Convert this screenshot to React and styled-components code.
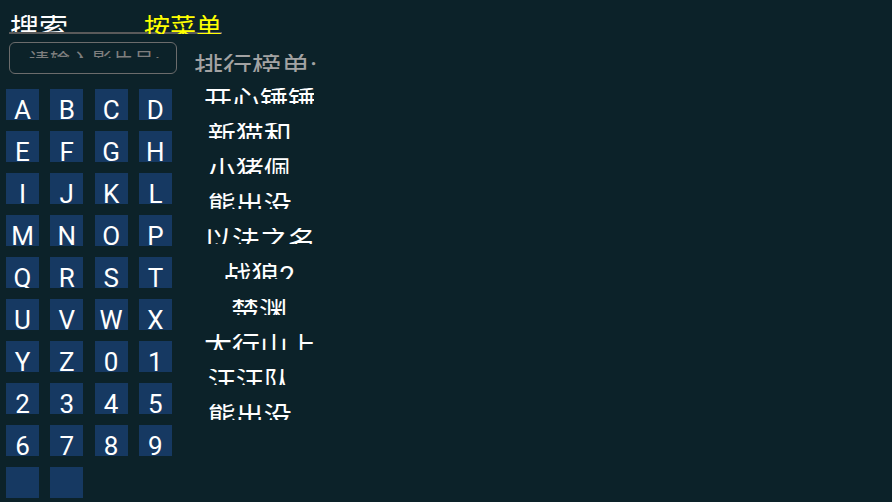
import React from "react";
import styled, { createGlobalStyle } from "styled-components";

const GlobalStyle = createGlobalStyle`
  html, body {
    margin: 0;
    padding: 0;
    background: #0c2229;
  }
  body {
    font-family: Roboto, "Noto Sans CJK SC", sans-serif;
    color: #fff;
  }
`;

const keys = [
  "A", "B", "C", "D", "E", "F", "G", "H", "I", "J", "K", "L", "M",
  "N", "O", "P", "Q", "R", "S", "T", "U", "V", "W", "X", "Y", "Z",
  "0", "1", "2", "3", "4", "5", "6", "7", "8", "9", "", "",
];

const ranking = [
  "开心锤锤",
  "新猫和…",
  "小猪佩…",
  "熊出没…",
  "以法之名",
  "战狼2",
  "楚渊",
  "太行山上",
  "汪汪队…",
  "熊出没…",
];

const Page = styled.div`
  width: 892px;
  height: 502px;
  overflow: hidden;
`;

const Header = styled.div`
  display: flex;
  align-items: flex-start;
  width: 213px;
  height: 32px;
  margin-left: 9px;
  border-bottom: 2px solid #5a5a5a;
`;

const Tab = styled.div`
  margin-top: 15px;
  margin-left: ${(p) => (p.$active ? "auto" : "1px")};
  height: ${(p) => (p.$active ? 19 : 17)}px;
  overflow: hidden;
  font-size: ${(p) => (p.$active ? 26 : 29)}px;
  line-height: 1;
  color: ${(p) => (p.$active ? "#ffff00" : "#ffffff")};
  white-space: nowrap;
`;

const Main = styled.div`
  display: flex;
  padding-left: 6px;
`;

const LeftCol = styled.div`
  width: 172px;
  display: flex;
  flex-direction: column;
`;

const SearchBox = styled.div`
  box-sizing: border-box;
  width: 168px;
  height: 32px;
  margin: 8px 0 0 3px;
  border: 1.5px solid #6c6c6c;
  border-radius: 6px;
`;

const Placeholder = styled.div`
  margin: 8px 0 0 19px;
  height: 7px;
  overflow: hidden;
  font-size: 20px;
  line-height: 1;
  letter-spacing: 1px;
  color: #7e7e7e;
  white-space: nowrap;
`;

const KeyGrid = styled.div`
  display: grid;
  grid-template-columns: repeat(4, 33px);
  grid-auto-rows: 31px;
  column-gap: 11.3px;
  row-gap: 11px;
  margin-top: 15px;
`;

const Key = styled.div`
  box-sizing: border-box;
  height: 31px;
  padding-top: 8px;
  overflow: hidden;
  background: #163962;
  color: #fff;
  font-size: 26px;
  line-height: 26px;
  text-align: center;
`;

const RightCol = styled.div`
  margin-left: 16px;
  display: flex;
  flex-direction: column;
`;

const RankTitle = styled.div`
  margin-top: 20px;
  height: 18px;
  overflow: hidden;
  font-size: 29px;
  line-height: 1;
  color: #a3a3a3;
  white-space: nowrap;
`;

const RankList = styled.div`
  display: flex;
  flex-direction: column;
  gap: 19.1px;
  margin-top: 16px;
  padding-left: 10px;
`;

const RankItem = styled.div`
  width: 110px;
  height: 16px;
  overflow: hidden;
  font-size: 28px;
  line-height: 1;
  text-align: center;
  white-space: nowrap;
  color: #fff;
`;

export default function App() {
  return (
    <Page>
      <GlobalStyle />
      <Header>
        <Tab>搜索</Tab>
        <Tab $active>按菜单</Tab>
      </Header>
      <Main>
        <LeftCol>
          <SearchBox>
            <Placeholder>请输入影片号:</Placeholder>
          </SearchBox>
          <KeyGrid>
            {keys.map((k, i) => (
              <Key key={i}>{k}</Key>
            ))}
          </KeyGrid>
        </LeftCol>
        <RightCol>
          <RankTitle>排行榜单:</RankTitle>
          <RankList>
            {ranking.map((name, i) => (
              <RankItem key={i}>{name}</RankItem>
            ))}
          </RankList>
        </RightCol>
      </Main>
    </Page>
  );
}
